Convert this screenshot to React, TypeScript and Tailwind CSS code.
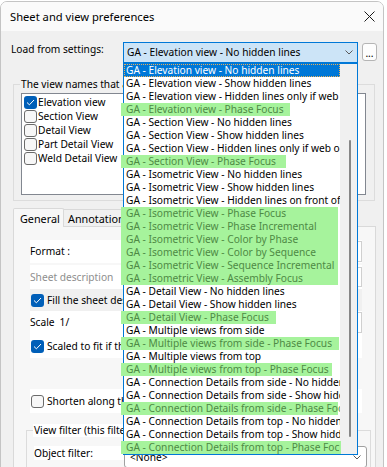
import React from 'react';

type Item = { text: string; hl?: number };

const items: Item[] = [
  { text: 'GA - Elevation view - No hidden lines' },
  { text: 'GA - Elevation view - Show hidden lines' },
  { text: 'GA - Elevation view - Hidden lines only if web objects' },
  { text: 'GA - Elevation view - Phase Focus', hl: 169 },
  { text: 'GA - Section View - No hidden lines' },
  { text: 'GA - Section View - Show hidden lines' },
  { text: 'GA - Section View - Hidden lines only if web objects' },
  { text: 'GA - Section View - Phase Focus', hl: 165 },
  { text: 'GA - Isometric View - No hidden lines' },
  { text: 'GA - Isometric View - Show hidden lines' },
  { text: 'GA - Isometric View - Hidden lines on front of objects' },
  { text: 'GA - Isometric View - Phase Focus', hl: 217 },
  { text: 'GA - Isometric View - Phase Incremental', hl: 217 },
  { text: 'GA - Isometric View - Color by Phase', hl: 217 },
  { text: 'GA - Isometric View - Color by Sequence', hl: 217 },
  { text: 'GA - Isometric View - Sequence Incremental', hl: 217 },
  { text: 'GA - Isometric View - Assembly Focus', hl: 217 },
  { text: 'GA - Detail View - No hidden lines' },
  { text: 'GA - Detail View - Show hidden lines' },
  { text: 'GA - Detail View - Phase Focus', hl: 155 },
  { text: 'GA - Multiple views from side' },
  { text: 'GA - Multiple views from side - Phase Focus', hl: 218 },
  { text: 'GA - Multiple views from top' },
  { text: 'GA - Multiple views from top - Phase Focus', hl: 211 },
  { text: 'GA - Connection Details from side - No hidden lines' },
  { text: 'GA - Connection Details from side - Show hidden lines' },
  { text: 'GA - Connection Details from side - Phase Focus', hl: 217 },
  { text: 'GA - Connection Details from top - No hidden lines' },
  { text: 'GA - Connection Details from top - Show hidden lines' },
  { text: 'GA - Connection Details from top - Phase Focus', hl: 220 },
];

const Chevron = () => (
  <svg width="8" height="5" viewBox="0 0 8 5" className="shrink-0">
    <path d="M0.5 0.5 L4 4 L7.5 0.5" fill="none" stroke="#5a5a5a" strokeWidth="1" />
  </svg>
);

const CheckBox = ({ checked }: { checked?: boolean }) =>
  checked ? (
    <span className="flex w-[13px] h-[13px] shrink-0 rounded-[3px] bg-[#005fb8] items-center justify-center">
      <svg width="9" height="7" viewBox="0 0 9 7">
        <path d="M1 3.5 L3.4 5.8 L8 1" fill="none" stroke="#fff" strokeWidth="1" />
      </svg>
    </span>
  ) : (
    <span className="block w-[13px] h-[13px] shrink-0 rounded-[3px] border border-[#6b6b6b] bg-[#f7f7f7]" />
  );

const viewNames = [
  { name: 'Elevation view', checked: true },
  { name: 'Section View' },
  { name: 'Detail View' },
  { name: 'Part Detail View' },
  { name: 'Weld Detail View' },
];

// the open list of the "Load from settings" combobox
const Dropdown = () => (
  <div className="absolute left-[123px] top-[63px] w-[235px] h-[392px] border border-[#0078d7] bg-white flex">
    <div className="w-[216px] flex flex-col">
      {items.map((it, i) => (
        <div key={i} className="relative h-[13px] shrink-0">
          {it.hl && (
            <div className="absolute left-[-3px] top-0 h-[13px] bg-[#a6f39c]" style={{ width: it.hl }} />
          )}
          <div
            className={`relative h-[13px] pl-[2px] leading-[13px] whitespace-nowrap overflow-hidden ${
              i === 0
                ? 'bg-[#0078d7] text-white outline-1 outline-dotted outline-offset-[-1px] outline-[#e8b05a]'
                : it.hl
                ? 'text-[#4e8a45]'
                : 'text-black'
            }`}
          >
            {it.text}
          </div>
        </div>
      ))}
    </div>
    <div className="flex-1 bg-[#f0f0f0] pt-[76px] pl-[9px]">
      <div className="w-[2px] h-[297px] rounded-full bg-[#868686]" />
    </div>
  </div>
);

export default function App() {
  return (
    <div className="relative w-[387px] h-[467px] overflow-hidden bg-white font-['Noto_Sans',sans-serif] text-[10.2px] leading-[13px] text-black">
      <div className="mt-[1px] w-[384px] h-[480px] flex flex-col border border-[#c4c4c4] rounded-t-[7px] overflow-hidden">
        {/* title bar */}
        <div className="h-[29px] shrink-0 bg-[#fafafa] flex items-center justify-between pl-[9px] pr-[8px]">
          <span className="text-[11.2px]">Sheet and view preferences</span>
          <svg width="11" height="11" viewBox="0 0 11 11">
            <path d="M0.5 0.5 L10.5 10.5 M10.5 0.5 L0.5 10.5" stroke="#1a1a1a" strokeWidth="1" />
          </svg>
        </div>

        <div className="flex-1 bg-[#f0f0f0] flex flex-col">
          {/* load from settings */}
          <div className="mt-[11px] h-[21px] flex items-start">
            <span className="ml-[10px] w-[112px] pt-[1px]">Load from settings:</span>
            <div className="w-[235px] h-[21px] border border-[#0078d7] bg-[#cce4f7] flex items-center justify-between pl-[3px] pr-[4px]">
              <span className="whitespace-nowrap">GA - Elevation view - No hidden lines</span>
              <Chevron />
            </div>
            <div className="ml-[4px] mt-[1px] w-[15px] h-[18px] border border-[#b5b5b5] rounded-[3px] bg-[#fdfdfd] flex items-end justify-center pb-[3px] leading-[8px]">
              ...
            </div>
          </div>

          {/* view names group */}
          <div className="relative mt-[21px] ml-[12px] w-[362px] h-[117px] shrink-0 border border-[#dcdcdc]">
            <span className="absolute left-[6px] -top-[7px] bg-[#f0f0f0] px-[1px] whitespace-nowrap">
              The view names that are loaded from the settings
            </span>
            <div className="mt-[8px] ml-[7px] w-[345px] h-[102px] border border-[#828790] bg-white pt-[1px]">
              {viewNames.map((v) => (
                <div key={v.name} className="h-[14px] flex items-center">
                  <span className="ml-[2px]">
                    <CheckBox checked={v.checked} />
                  </span>
                  <span className="ml-[1px] whitespace-nowrap">{v.name}</span>
                </div>
              ))}
            </div>
          </div>

          {/* tabs */}
          <div className="mt-[7px] ml-[12px] h-[18px] flex items-end">
            <div className="relative z-10 -mb-px w-[51px] h-[19px] bg-[#f7f7f7] border border-b-0 border-[#d9d9d9] rounded-t-[2px] pl-[6px] pt-[3px] text-[10.8px]">
              General
            </div>
            <div className="h-[17px] border border-l-0 border-b-0 border-[#d9d9d9] bg-[#f0f0f0] pl-[4px] pr-[6px] pt-[2px] text-[10.8px]">
              Annotations
            </div>
          </div>

          {/* tab panel */}
          <div className="ml-[12px] w-[363px] flex-1 bg-[#f7f7f7] border border-[#d9d9d9] pl-[12px] pt-[13px]">
            <div className="ml-[4px] w-[332px] flex flex-col">
              <div className="h-[23px] bg-white flex items-center">
                <span className="w-[93px]">Format :</span>
                <div className="w-[239px] h-[21px] border border-[#d0d0d0] bg-white" />
              </div>
              <div className="mt-[2px] h-[24px] bg-white flex items-center">
                <span className="w-[93px] text-[#8e8e8e] whitespace-nowrap">Sheet description</span>
                <div className="w-[239px] h-[20px] border border-[#d0d0d0] bg-white" />
              </div>
              <div className="h-[22px] bg-[#f0f0f0] flex items-center">
                <span className="ml-[1px]">
                  <CheckBox checked />
                </span>
                <span className="ml-[3px] whitespace-nowrap">Fill the sheet description automatically</span>
              </div>
              <div className="h-[23px] bg-white flex items-center">
                <span className="w-[93px] flex gap-[5px]">
                  <span>Scale</span>
                  <span>1/</span>
                </span>
                <div className="w-[239px] h-[21px] border border-[#d0d0d0] bg-white" />
              </div>
              <div className="h-[24px] bg-white flex items-center">
                <span className="ml-[1px]">
                  <CheckBox checked />
                </span>
                <span className="ml-[3px] whitespace-nowrap">Scaled to fit if the view is too large</span>
              </div>
              <div className="h-[31px]" />
              <div className="h-[24px] bg-white flex items-center">
                <span className="ml-[1px]">
                  <CheckBox />
                </span>
                <span className="ml-[3px] whitespace-nowrap">Shorten along the axis</span>
              </div>
            </div>

            {/* view filter group */}
            <div className="relative mt-[17px] w-[345px] h-[60px] border border-[#dcdcdc]">
              <span className="absolute left-[6px] -top-[7px] bg-white px-[1px] whitespace-nowrap">
                View filter (this filter is applied to the view)
              </span>
              <div className="mt-[15px] flex items-start">
                <span className="ml-[7px] w-[90px] pt-[1px] bg-white">Object filter:</span>
                <div className="w-[243px] h-[22px] border border-[#a0a0a0] rounded-[3px] bg-white flex items-center justify-between pl-[5px] pr-[5px]">
                  <span>&lt;None&gt;</span>
                  <Chevron />
                </div>
              </div>
            </div>
          </div>
        </div>
      </div>

      <Dropdown />
    </div>
  );
}
